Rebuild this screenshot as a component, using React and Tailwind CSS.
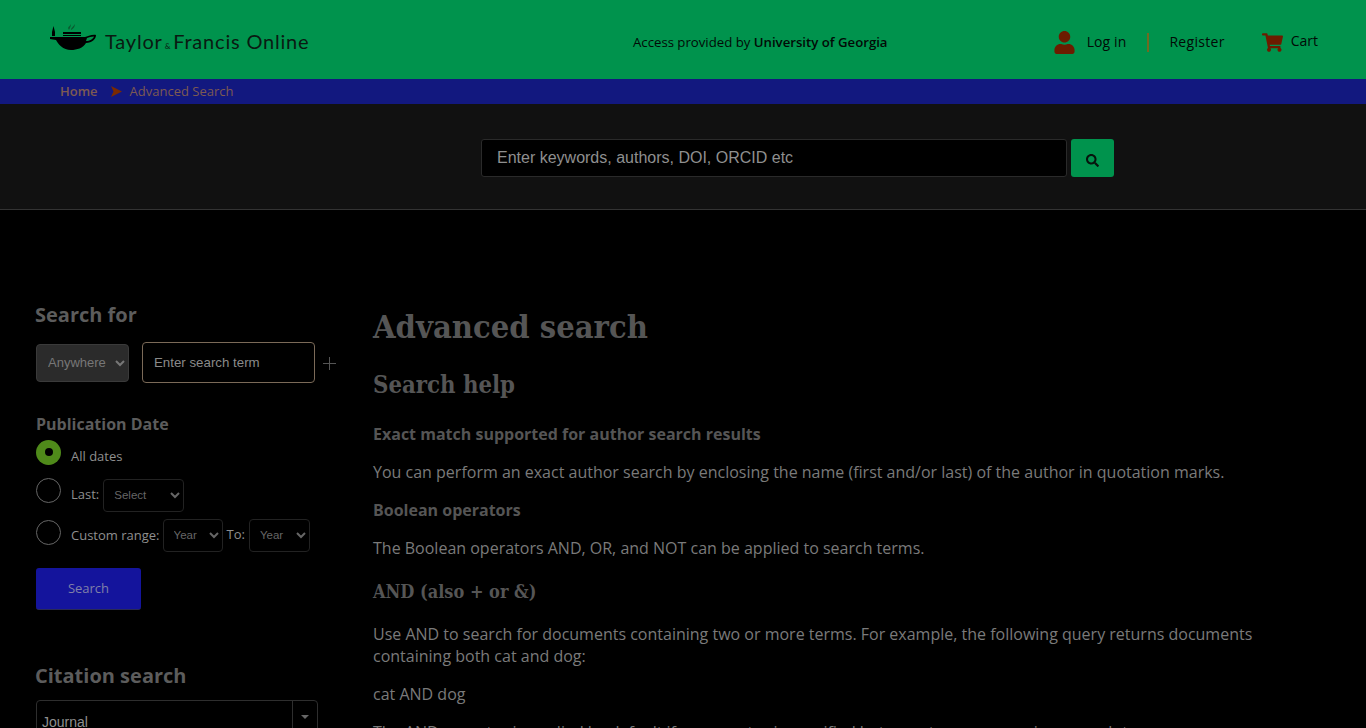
import { FaUser, FaShoppingCart, FaSearch } from 'react-icons/fa';

const openSans = { fontFamily: '"Open Sans", sans-serif' };

function Logo() {
  return (
    <div className="flex items-center whitespace-nowrap">
      <svg width="50" height="30" viewBox="0 0 50 30" className="shrink-0">
        <path d="M3 9 L4.500 3 L6 9 L6 13 L3 13 Z" fill="#000" />
        <path d="M19 5 C20 3 21 3 22 1 C22 3 21 5 20 7 Z M22 6 C23 4 25 3 26 1 C26 4 24 6 22 7 Z" fill="#0b5a30" />
        <path d="M14 9 H32 V11 H14 Z M14 12 H32 V13 H14 Z" fill="#000" />
        <path d="M1 14 H36 C38 14 43 11 47 12 C47 16 43 20 37 20 C34 25 28 27 22 27 C14 27 9 21 7 17 L1 16 Z" fill="#000" />
        <path d="M38 15 C40 14 42 14 45 13.500 C44 16 41 18 37 18 Z" fill="#00934d" />
      </svg>
      <span className="ml-[6px] mt-[7px] text-[20px] leading-none tracking-[0.8px] text-[#0a1a12]" style={{ fontFamily: 'Lato, sans-serif' }}>
        Taylor<span className="mx-[2px] text-[8px]">&amp;</span>Francis Online
      </span>
    </div>
  );
}

function Header() {
  return (
    <header className="flex h-[79px] items-center bg-[#00934d] pr-[48px] pl-[49px] text-[#020a06]" style={openSans}>
      <div className="mt-[-4px] w-[261px] shrink-0">
        <Logo />
      </div>
      <p className="ml-[323px] mt-[7px] text-[13.200px]">
        Access provided by <b className="font-semibold">University of Georgia</b>
      </p>
      <div className="ml-auto mt-[5px] flex items-center text-[14px]">
        <FaUser className="text-[23px] text-[#6b1c00]" />
        <a className="ml-[11px] mt-[-2px] tracking-[0.1px]">Log in</a>
        <span className="ml-[21px] h-[19px] w-[2px] shrink-0 bg-[#6f6a22]" />
        <a className="ml-[20px] mt-[-2px] tracking-[0.3px]">Register</a>
        <FaShoppingCart className="ml-[37px] text-[21px] text-[#6b1c00]" />
        <a className="ml-[8px] mt-[-3px]">Cart</a>
      </div>
    </header>
  );
}

function Breadcrumb() {
  return (
    <nav className="flex h-[25px] items-center bg-[#12187f] pl-[60px] text-[13px] font-semibold text-[#7d5a52]" style={openSans}>
      <a>Home</a>
      <svg width="11" height="11" viewBox="0 0 11 11" className="ml-[13px] mr-[8px]">
        <path d="M0 0 L11 5.500 L0 11 L2.500 5.500 Z" fill="#7a2a00" />
      </svg>
      <a className="font-medium">Advanced Search</a>
    </nav>
  );
}

function SearchBand() {
  return (
    <div className="flex h-[106px] items-start border-b border-[#333333] bg-[#111111] pt-[35px] pl-[481px]">
      <div className="flex h-[38px] w-[586px] items-center rounded-[3px] border border-[#2a2a2a] bg-black pl-[15px] text-[16px] text-[#8f8f8f]" style={{ fontFamily: '"Liberation Sans", sans-serif' }}>
        Enter keywords, authors, DOI, ORCID etc
      </div>
      <button className="ml-[4px] flex h-[38px] w-[43px] items-center justify-center rounded-[3px] bg-[#00934d]">
        <FaSearch className="mt-[5px] text-[13px] text-[#06140d]" />
      </button>
    </div>
  );
}

function Radio({ checked }) {
  return (
    <span className={`flex h-[25px] w-[25px] shrink-0 items-center justify-center rounded-full ${checked ? 'bg-[#4f8a1a]' : 'border border-[#666666]'}`}>
      {checked && <span className="h-[8px] w-[8px] rounded-full bg-black" />}
    </span>
  );
}

function DarkSelect({ children, className }) {
  return (
    <select className={`rounded-[4px] border border-[#222222] bg-black text-[#666666] ${className}`} style={{ fontFamily: '"Liberation Sans", sans-serif' }}>
      {children}
    </select>
  );
}

function Sidebar() {
  return (
    <aside className="w-[373px] shrink-0 pl-[35px] text-[#8f8f8f]" style={openSans}>
      <h3 className="mt-[-2px] text-[20px] leading-[25px] font-bold text-[#5c5c5c]">Search for</h3>
      <div className="mt-[15px] flex items-center pl-px">
        <select className="h-[38px] w-[93px] rounded-[4px] border border-[#3a3a3a] bg-[#2b2b2b] pl-[7px] text-[13px] text-[#777777]" style={{ fontFamily: '"Liberation Sans", sans-serif' }}>
          <option>Anywhere</option>
        </select>
        <div className="ml-[13px] flex h-[41px] w-[173px] items-center rounded-[4px] border border-[#7b6a58] bg-black pl-[11px] text-[13.300px] text-[#8a8a8a]" style={{ fontFamily: '"Liberation Sans", sans-serif' }}>
          Enter search term
        </div>
        <svg width="13" height="13" viewBox="0 0 13 13" className="ml-[8px] mt-[1px]">
          <path d="M6.500 0 V13 M0 6.500 H13" stroke="#555555" strokeWidth="1" />
        </svg>
      </div>

      <h4 className="mt-[29px] pl-px text-[16px] leading-[24px] font-bold text-[#5c5c5c]">Publication Date</h4>
      <div className="pl-px text-[13px]">
        <div className="mt-[1px] flex h-[30px] items-center">
          <Radio checked />
          <span className="ml-[10px] mt-[10px]">All dates</span>
        </div>
        <div className="mt-[10px] flex h-[36px] items-center">
          <span className="mt-[-9px] flex"><Radio /></span>
          <span className="ml-[10px]">Last:</span>
          <DarkSelect className="ml-[4px] h-[33px] w-[81px] pl-[6px] text-[11.500px]"><option>Select</option></DarkSelect>
        </div>
        <div className="mt-[5px] flex h-[34px] items-center">
          <span className="mt-[-6px] flex"><Radio /></span>
          <span className="ml-[10px] mt-[2px]">Custom range:</span>
          <DarkSelect className="ml-[3px] h-[33px] w-[60px] pl-[6px] text-[11.500px]"><option>Year</option></DarkSelect>
          <span className="ml-[4px]">To:</span>
          <DarkSelect className="ml-[4px] h-[33px] w-[61px] pl-[6px] text-[11.500px]"><option>Year</option></DarkSelect>
        </div>
      </div>
      <button className="mt-[16px] ml-px h-[42px] w-[105px] rounded-[3px] border-b border-[#2a2a55] bg-[#14149c] text-[13px] text-[#8080a8]">Search</button>

      <h3 className="mt-[53px] text-[20px] leading-[25px] font-bold text-[#5c5c5c]">Citation search</h3>
      <div className="mt-[12px] ml-px flex h-[40px] w-[282px] rounded-t-[4px] border border-[#2e2e2e] bg-black" style={{ fontFamily: '"Liberation Sans", sans-serif' }}>
        <span className="flex-1 pl-[5px] pt-[11px] text-[14px] text-[#8f8f8f]">Journal</span>
        <span className="flex w-[25px] justify-center border-l border-[#2e2e2e] pt-[14px]">
          <span className="h-0 w-0 border-x-[4px] border-t-[4px] border-x-transparent border-t-[#666666]" />
        </span>
      </div>
    </aside>
  );
}

function Content() {
  const serif = { fontFamily: '"DejaVu Serif Condensed", "DejaVu Serif", serif' };
  return (
    <main className="mt-[3px] w-[890px] text-[16px] leading-[22px] text-[#7a7a7a]" style={openSans}>
      <h1 className="text-[32.400px] leading-[40px] font-bold text-[#555555]" style={serif}>Advanced search</h1>
      <h2 className="mt-[22px] text-[23.700px] leading-[32px] font-bold text-[#555555]" style={serif}>Search help</h2>
      <p className="mt-[22px] font-bold text-[#555555]">Exact match supported for author search results</p>
      <p className="mt-[16px]">You can perform an exact author search by enclosing the name (first and/or last) of the author in quotation marks.</p>
      <p className="mt-[16px] font-bold text-[#555555]">Boolean operators</p>
      <p className="mt-[16px]">The Boolean operators AND, OR, and NOT can be applied to search terms.</p>
      <h3 className="mt-[21px] text-[18px] leading-[24px] font-bold text-[#555555]" style={serif}>AND (also + or &amp;)</h3>
      <p className="mt-[19px]">Use AND to search for documents containing two or more terms. For example, the following query returns documents containing both cat and dog:</p>
      <p className="mt-[16px]">cat AND dog</p>
      <p className="mt-[16px]">The AND operator is applied by default if no operator is specified between two or more given search terms.</p>
    </main>
  );
}

export default function App() {
  return (
    <div className="h-[728px] overflow-hidden bg-black">
      <Header />
      <Breadcrumb />
      <SearchBand />
      <div className="flex pt-[94px]">
        <Sidebar />
        <Content />
      </div>
    </div>
  );
}
